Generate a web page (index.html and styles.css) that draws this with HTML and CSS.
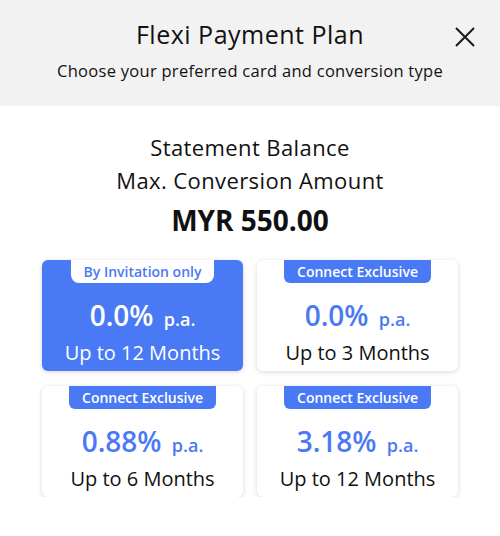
FILE: index.html
```html
<!DOCTYPE html>
<html>
<head>
<meta charset="utf-8">
<link rel="stylesheet" href="styles.css">
</head>
<body>
<header class="header">
  <h1 class="title">Flexi Payment Plan</h1>
  <p class="subtitle">Choose your preferred card and conversion type</p>
  <button class="close" aria-label="Close">
    <svg width="20" height="20" viewBox="0 0 20 20"><path d="M1 1L19 19M19 1L1 19" stroke="#1a1a1a" stroke-width="2" fill="none"/></svg>
  </button>
</header>
<main class="main">
  <div class="summary">
    <p class="label">Statement Balance</p>
    <p class="label">Max. Conversion Amount</p>
    <p class="amount">MYR 550.00</p>
  </div>
  <div class="grid">
    <div class="card card-active">
      <span class="badge badge-light">By Invitation only</span>
      <div class="rate">0.0% <span class="pa">p.a.</span></div>
      <div class="term">Up to 12 Months</div>
    </div>
    <div class="card">
      <span class="badge">Connect Exclusive</span>
      <div class="rate">0.0% <span class="pa">p.a.</span></div>
      <div class="term">Up to 3 Months</div>
    </div>
    <div class="card">
      <span class="badge">Connect Exclusive</span>
      <div class="rate">0.88% <span class="pa">p.a.</span></div>
      <div class="term">Up to 6 Months</div>
    </div>
    <div class="card">
      <span class="badge">Connect Exclusive</span>
      <div class="rate">3.18% <span class="pa">p.a.</span></div>
      <div class="term">Up to 12 Months</div>
    </div>
  </div>
</main>
</body>
</html>
```
FILE: styles.css
```css
* { box-sizing: border-box; }
body {
  margin: 0;
  background: #ffffff;
  font-family: "Open Sans", "Noto Sans", sans-serif;
  color: #111111;
}
.header {
  position: relative;
  background: #f2f2f2;
  height: 106px;
  padding-top: 18px;
  text-align: center;
}
.title {
  margin: 0;
  font-size: 25px;
  font-weight: 400;
  line-height: 32px;
  letter-spacing: 0.5px;
}
.subtitle {
  margin: 10px 0 0;
  font-size: 16.5px;
  line-height: 22px;
  letter-spacing: 0.28px;
}
.close {
  position: absolute;
  top: 27px;
  right: 25px;
  width: 20px;
  height: 20px;
  padding: 0;
  border: 0;
  background: none;
  display: block;
}
.close svg { display: block; }
.main {
  padding-top: 25px;
}
.summary {
  text-align: center;
}
.label {
  margin: 0;
  font-size: 22px;
  line-height: 33px;
  letter-spacing: 0.4px;
}
.amount {
  margin: 4px 0 0;
  font-size: 28px;
  font-weight: 700;
  line-height: 38px;
}
.grid {
  margin-top: 21px;
  display: grid;
  grid-template-columns: 201px 201px;
  grid-auto-rows: 111px;
  column-gap: 14px;
  row-gap: 15px;
  justify-content: center;
}
.card {
  background: #ffffff;
  border-radius: 6px;
  box-shadow: 0 1px 5px rgba(0, 0, 0, 0.16);
  display: flex;
  flex-direction: column;
  align-items: center;
}
.card-active {
  background: #4a79f5;
  color: #ffffff;
}
.badge {
  height: 23px;
  line-height: 23px;
  padding: 0 13px;
  border-radius: 0 0 6px 6px;
  background: #4a79f5;
  color: #ffffff;
  font-size: 14px;
  font-weight: 600;
}
.badge-light {
  background: #ffffff;
  color: #4a79f5;
  border-radius: 0 0 8px 8px;
}
.rate {
  margin-top: 14px;
  height: 36px;
  line-height: 36px;
  font-size: 28px;
  font-weight: 600;
  color: #4a79f5;
}
.card-active .rate { color: #ffffff; }
.pa {
  font-size: 18px;
  margin-left: 3px;
}
.term {
  margin-top: 8px;
  line-height: 24px;
  font-size: 20px;
}
```
